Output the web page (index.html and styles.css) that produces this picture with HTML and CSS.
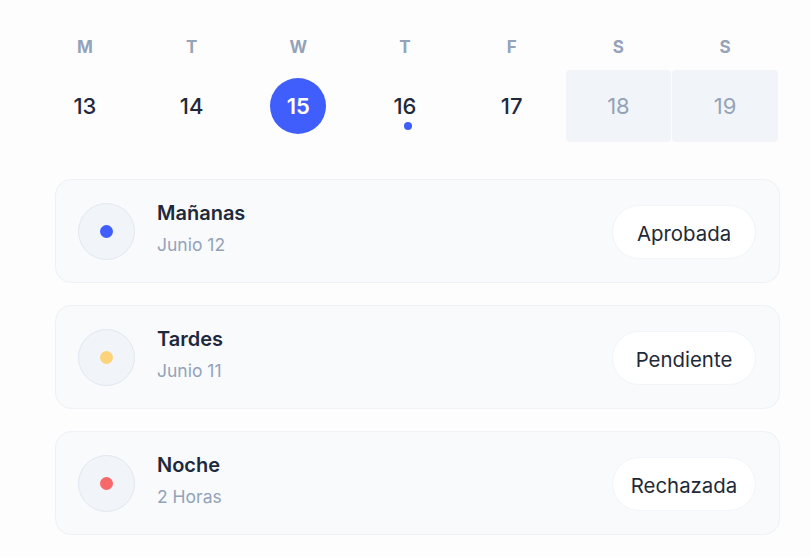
FILE: index.html
```html
<!DOCTYPE html>
<html lang="es">
<head>
<meta charset="utf-8">
<title>Calendario</title>
<link rel="stylesheet" href="styles.css">
</head>
<body>
<div class="page">
  <div class="week">
    <div class="day"><div class="dname">M</div><div class="dnum">13</div></div>
    <div class="day"><div class="dname">T</div><div class="dnum">14</div></div>
    <div class="day"><div class="dname">W</div><div class="dnum"><span class="active">15</span></div></div>
    <div class="day"><div class="dname">T</div><div class="dnum event">16<span class="evdot"></span></div></div>
    <div class="day"><div class="dname">F</div><div class="dnum">17</div></div>
    <div class="day"><div class="dname">S</div><div class="dnum weekend">18</div></div>
    <div class="day"><div class="dname">S</div><div class="dnum weekend">19</div></div>
  </div>
  <div class="list">
    <div class="card">
      <div class="icon"><span class="dot blue"></span></div>
      <div class="info"><div class="title">Mañanas</div><div class="sub">Junio 12</div></div>
      <div class="pill">Aprobada</div>
    </div>
    <div class="card">
      <div class="icon"><span class="dot yellow"></span></div>
      <div class="info"><div class="title">Tardes</div><div class="sub">Junio 11</div></div>
      <div class="pill">Pendiente</div>
    </div>
    <div class="card">
      <div class="icon"><span class="dot red"></span></div>
      <div class="info"><div class="title">Noche</div><div class="sub">2 Horas</div></div>
      <div class="pill">Rechazada</div>
    </div>
  </div>
</div>
</body>
</html>
```
FILE: styles.css
```css
* { box-sizing: border-box; }
html, body { margin: 0; padding: 0; }
body {
  background: #fdfdfe;
  font-family: Inter, "Noto Sans", sans-serif;
  width: 810px;
  height: 557px;
  overflow: hidden;
}
.page {
  padding: 34px 31px 0 32px;
}
.week {
  display: grid;
  grid-template-columns: repeat(7, 1fr);
  column-gap: 1px;
  width: 746px;
}
.day {
  display: flex;
  flex-direction: column;
  align-items: center;
}
.dname {
  font-size: 17px;
  font-weight: 700;
  color: #94a3b8;
  line-height: 26px;
  height: 26px;
}
.dnum {
  margin-top: 10px;
  width: 100%;
  height: 72px;
  display: flex;
  align-items: center;
  justify-content: center;
  font-size: 22px;
  font-weight: 500;
  color: #1e293b;
  position: relative;
}
.dnum.weekend {
  background: #f1f5f9;
  color: #94a3b8;
  font-weight: 400;
  border-radius: 4px;
}
.active {
  width: 56px;
  height: 56px;
  border-radius: 50%;
  background: #3f5efb;
  color: #ffffff;
  display: flex;
  align-items: center;
  justify-content: center;
  font-weight: 600;
}
.evdot {
  position: absolute;
  left: 50%;
  top: 52px;
  margin-left: -1px;
  width: 8px;
  height: 8px;
  border-radius: 50%;
  background: #3f5efb;
}
.list {
  margin-top: 37px;
  margin-left: 23px;
  width: 725px;
  display: flex;
  flex-direction: column;
  gap: 22px;
}
.card {
  height: 104px;
  background: #f8fafc;
  border: 1px solid #eef2f6;
  border-radius: 16px;
  display: flex;
  align-items: center;
  padding: 0 23px 0 22px;
}
.icon {
  width: 57px;
  height: 57px;
  border-radius: 50%;
  background: #f1f5f9;
  border: 1px solid #e2e8f0;
  display: flex;
  align-items: center;
  justify-content: center;
  flex: none;
}
.dot {
  width: 13px;
  height: 13px;
  border-radius: 50%;
}
.dot.blue { background: #3f5efb; }
.dot.yellow { background: #fcd37a; }
.dot.red { background: #f86868; }
.info {
  margin-left: 22px;
  flex: 1;
  display: flex;
  flex-direction: column;
  gap: 9px;
  margin-top: -5px;
}
.title {
  font-size: 20px;
  font-weight: 600;
  color: #1e293b;
  line-height: 24px;
}
.sub {
  font-size: 17.5px;
  color: #94a3b8;
  line-height: 22px;
}
.pill {
  width: 144px;
  height: 54px;
  margin-top: 1px;
  padding-top: 3px;
  border-radius: 27px;
  background: #ffffff;
  border: 1px solid #f1f5f9;
  display: flex;
  align-items: center;
  justify-content: center;
  font-size: 20.4px;
  color: #1f2937;
  flex: none;
}
```
